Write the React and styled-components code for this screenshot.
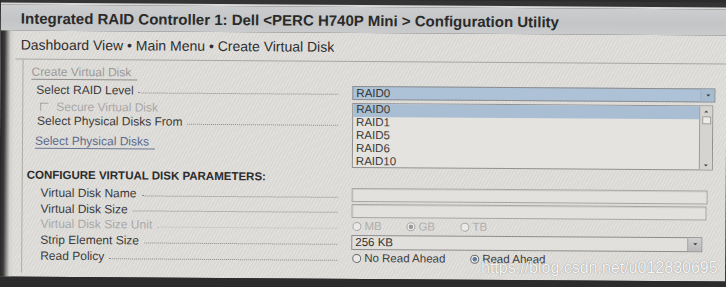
import React from 'react';
import styled, { createGlobalStyle } from 'styled-components';

const FONT = `'Liberation Sans', Arial, sans-serif`;

const GlobalStyle = createGlobalStyle`
  html, body {
    margin: 0;
    padding: 0;
    background: #2a2a2a;
  }
  body {
    font-family: ${FONT};
  }
`;

const Viewport = styled.div`
  position: relative;
  width: 726px;
  height: 287px;
  overflow: hidden;
  background: #2b2b2b;
`;

/* the photo is taken a little askew, so the whole screen is tilted */
const Screen = styled.div`
  width: 726px;
  height: 287px;
  display: flex;
  flex-direction: column;
  transform: rotate(0.4deg);
  transform-origin: 363px 143px;
`;

const TopBezel = styled.div`
  height: 5px;
  background: #343434;
`;

const TitleBar = styled.header`
  height: 26px;
  display: flex;
  align-items: center;
  padding-left: 20px;
  border-top: 2px solid #d9d9d8;
  background: linear-gradient(#cbcdce, #c3c5c6 55%, #cacbcc);
  font-size: 15px;
  font-weight: 700;
  color: #2a2a2a;
  white-space: nowrap;
`;

const Body = styled.div`
  flex: 1;
  display: flex;
  flex-direction: column;
  background:
    linear-gradient(to right, #252525 0, #3b3b3b 4px, #8f8d8b 7px, #d3d1ce 10px, rgba(225, 223, 220, 0) 14px),
    repeating-linear-gradient(118deg, rgba(255, 255, 255, 0.12) 0 1px, rgba(0, 0, 0, 0.02) 1px 3px),
    #dfddda;
`;

const Breadcrumb = styled.nav`
  height: 28px;
  display: flex;
  align-items: center;
  margin-left: 15px;
  padding-left: 5px;
  border-bottom: 1px solid #a7a7a6;
  font-size: 14px;
  color: #2e2e2e;
  white-space: nowrap;
`;

const Panel = styled.section`
  flex: 1;
  display: flex;
  flex-direction: column;
  margin: 0 0 4px 22px;
  border-left: 1px solid #acacab;
`;

const TopSection = styled.div`
  display: flex;
`;

const LeftCol = styled.div`
  width: 329px;
  display: flex;
  flex-direction: column;
  align-items: flex-start;
`;

const RightCol = styled.div`
  display: flex;
  flex-direction: column;
  padding-top: 24px;
  gap: 3px;
`;

const LinkHeading = styled.div`
  margin: ${(p) => p.$top}px 0 0 ${(p) => p.$indent}px;
  padding-right: 6px;
  line-height: 14px;
  font-size: 12px;
  color: ${(p) => p.$color};
  border-bottom: 1px solid ${(p) => p.$line};
  white-space: nowrap;
`;

const FieldRow = styled.div`
  width: ${(p) => p.$w || 329}px;
  flex-shrink: 0;
  box-sizing: border-box;
  height: ${(p) => p.$h}px;
  margin-top: ${(p) => p.$top || 0}px;
  display: flex;
  align-items: center;
  padding: 0 14px 0 ${(p) => p.$indent}px;
  font-size: 12px;
  color: ${(p) => (p.$disabled ? '#a9a8a6' : '#3b3b3b')};
  white-space: nowrap;
`;

const Leader = styled.span`
  flex: 1;
  align-self: center;
  margin: 4px 0 0 5px;
  border-bottom: 1px dotted ${(p) => (p.$disabled ? '#bdbcba' : '#8d8c8a')};
`;

const CheckBox = styled.span`
  width: 7px;
  height: 7px;
  margin-right: 8px;
  border-top: 1px solid #a3a3a3;
  border-left: 1px solid #a3a3a3;
`;

const SelectBox = styled.div`
  width: ${(p) => p.$w}px;
  height: ${(p) => p.$h}px;
  box-sizing: border-box;
  display: flex;
  align-items: center;
  padding-left: 3px;
  border: 1px solid #8d8d8d;
  background: ${(p) => (p.$active ? '#adc2d6' : '#e2e0dd')};
  font-size: 11.5px;
  color: #333;
`;

const SelectArrow = styled.span`
  margin-left: auto;
  width: 13px;
  height: 100%;
  display: flex;
  align-items: center;
  justify-content: center;
  border-left: 1px solid ${(p) => (p.$active ? '#9fb2c4' : '#9a9a9a')};
  background: ${(p) => (p.$active ? '#a8bccf' : 'linear-gradient(#d0d0d0, #b9b9b9)')};

  &::after {
    content: '';
    border-left: 2px solid transparent;
    border-right: 2px solid transparent;
    border-top: 2px solid #333;
  }
`;

const ListBox = styled.div`
  width: 361px;
  height: 65px;
  box-sizing: border-box;
  display: flex;
  border: 1px solid #909090;
  background: #e5e3e0;
`;

const ListItems = styled.ul`
  flex: 1;
  margin: 0;
  padding: 0;
  list-style: none;
`;

const ListItem = styled.li`
  height: 13px;
  line-height: 10px;
  padding-left: 3px;
  font-size: 11.5px;
  color: #3a3a3a;
  background: ${(p) => (p.$selected ? '#a9bed2' : 'transparent')};
`;

const ScrollBar = styled.div`
  width: 12px;
  display: flex;
  flex-direction: column;
  align-items: center;
  border-left: 1px solid #9c9c9c;
  background: #d6d4d1;
`;

const ScrollArrow = styled.span`
  margin: ${(p) => (p.$down ? 'auto 0 3px' : '4px 0 0')};
  border-left: 2px solid transparent;
  border-right: 2px solid transparent;
  ${(p) => (p.$down ? 'border-top: 2px solid #444;' : 'border-bottom: 2px solid #444;')}
`;

const ScrollThumb = styled.span`
  width: 9px;
  height: 8px;
  margin-top: 4px;
  box-sizing: border-box;
  border: 1px solid #9a9a9a;
  background: #ecebea;
`;

const SectionTitle = styled.h3`
  margin: 2px 0 3px 4px;
  line-height: 14px;
  font-size: 11.5px;
  font-weight: 700;
  color: #2c2c2c;
`;

const ParamRow = styled.div`
  height: ${(p) => p.$h}px;
  display: flex;
  align-items: center;
`;

const TextBox = styled.div`
  width: ${(p) => p.$w}px;
  height: 14px;
  box-sizing: border-box;
  border: 1px solid #a6a6a5;
  background: #e3e1de;
  box-shadow: inset 1px 1px 0 #d0cecb;
`;

const RadioGroup = styled.div`
  display: flex;
  align-items: center;
  font-size: 11.5px;
  line-height: 10px;
  color: ${(p) => (p.$disabled ? '#b0afad' : '#3d3d3d')};
`;

const RadioOption = styled.label`
  width: ${(p) => p.$w}px;
  display: flex;
  align-items: center;
  padding-left: 1px;
  white-space: nowrap;
`;

const RadioDot = styled.span`
  width: 7px;
  height: 7px;
  margin-right: 3px;
  border-radius: 50%;
  border: 1px solid ${(p) => (p.$disabled ? '#a9a9a9' : '#6c6c6c')};
  background: ${(p) =>
    p.$checked
      ? `radial-gradient(circle, ${p.$disabled ? '#9a9a9a' : '#5f7ba6'} 0 2px, #eceae8 2.5px)`
      : '#ebe9e7'};
`;

const BottomBezel = styled.div`
  height: 8px;
  background: #2c2c2c;
`;

const Watermark = styled.div`
  position: absolute;
  left: 481px;
  top: 261px;
  font-size: 16px;
  line-height: 13px;
  color: #f6f6f6;
  text-shadow: 0 0 1px rgba(70, 70, 70, 0.7);
  white-space: nowrap;
`;

const raidLevels = ['RAID0', 'RAID1', 'RAID5', 'RAID6', 'RAID10'];

const Param = ({ label, disabled, h, children }) => (
  <ParamRow $h={h}>
    <FieldRow $h={h} $indent={18} $disabled={disabled}>
      {label}
      <Leader $disabled={disabled} />
    </FieldRow>
    {children}
  </ParamRow>
);

const App = () => {
  return (
    <Viewport>
      <GlobalStyle />
      <Screen>
        <TopBezel />
        <TitleBar>Integrated RAID Controller 1: Dell &lt;PERC H740P Mini &gt; Configuration Utility</TitleBar>
        <Body>
          <Breadcrumb>Dashboard View • Main Menu • Create Virtual Disk</Breadcrumb>
          <Panel>
            <TopSection>
              <LeftCol>
                <LinkHeading $top={5} $indent={8} $color="#9b9a98" $line="#8f8e8c">
                  Create Virtual Disk
                </LinkHeading>
                <FieldRow $h={16} $top={2} $indent={13}>
                  Select RAID Level
                  <Leader />
                </FieldRow>
                <FieldRow $h={14} $top={2} $indent={17} $disabled>
                  <CheckBox />
                  Secure Virtual Disk
                </FieldRow>
                <FieldRow $h={14} $indent={14}>
                  Select Physical Disks From
                  <Leader />
                </FieldRow>
                <LinkHeading $top={6} $indent={12} $color="#5c6b8b" $line="#6b7894">
                  Select Physical Disks
                </LinkHeading>
              </LeftCol>
              <RightCol>
                <SelectBox $w={363} $h={14} $active>
                  RAID0
                  <SelectArrow $active />
                </SelectBox>
                <ListBox>
                  <ListItems>
                    {raidLevels.map((level, i) => (
                      <ListItem key={level} $selected={i === 0}>
                        {level}
                      </ListItem>
                    ))}
                  </ListItems>
                  <ScrollBar>
                    <ScrollArrow />
                    <ScrollThumb />
                    <ScrollArrow $down />
                  </ScrollBar>
                </ListBox>
              </RightCol>
            </TopSection>

            <SectionTitle>CONFIGURE VIRTUAL DISK PARAMETERS:</SectionTitle>
            <Param label="Virtual Disk Name" h={16}>
              <TextBox $w={356} />
            </Param>
            <Param label="Virtual Disk Size" h={15}>
              <TextBox $w={355} />
            </Param>
            <Param label="Virtual Disk Size Unit" h={16} disabled>
              <RadioGroup $disabled>
                <RadioOption $w={53}>
                  <RadioDot $disabled />
                  MB
                </RadioOption>
                <RadioOption $w={53}>
                  <RadioDot $disabled $checked />
                  GB
                </RadioOption>
                <RadioOption $w={53}>
                  <RadioDot $disabled />
                  TB
                </RadioOption>
              </RadioGroup>
            </Param>
            <Param label="Strip Element Size" h={16}>
              <SelectBox $w={351} $h={15}>
                256 KB
                <SelectArrow />
              </SelectBox>
            </Param>
            <Param label="Read Policy" h={16}>
              <RadioGroup>
                <RadioOption $w={117}>
                  <RadioDot />
                  No Read Ahead
                </RadioOption>
                <RadioOption $w={90}>
                  <RadioDot $checked />
                  Read Ahead
                </RadioOption>
              </RadioGroup>
            </Param>
          </Panel>
        </Body>
        <BottomBezel />
      </Screen>
      <Watermark>https://blog.csdn.net/u012830695</Watermark>
    </Viewport>
  );
};

export default App;
